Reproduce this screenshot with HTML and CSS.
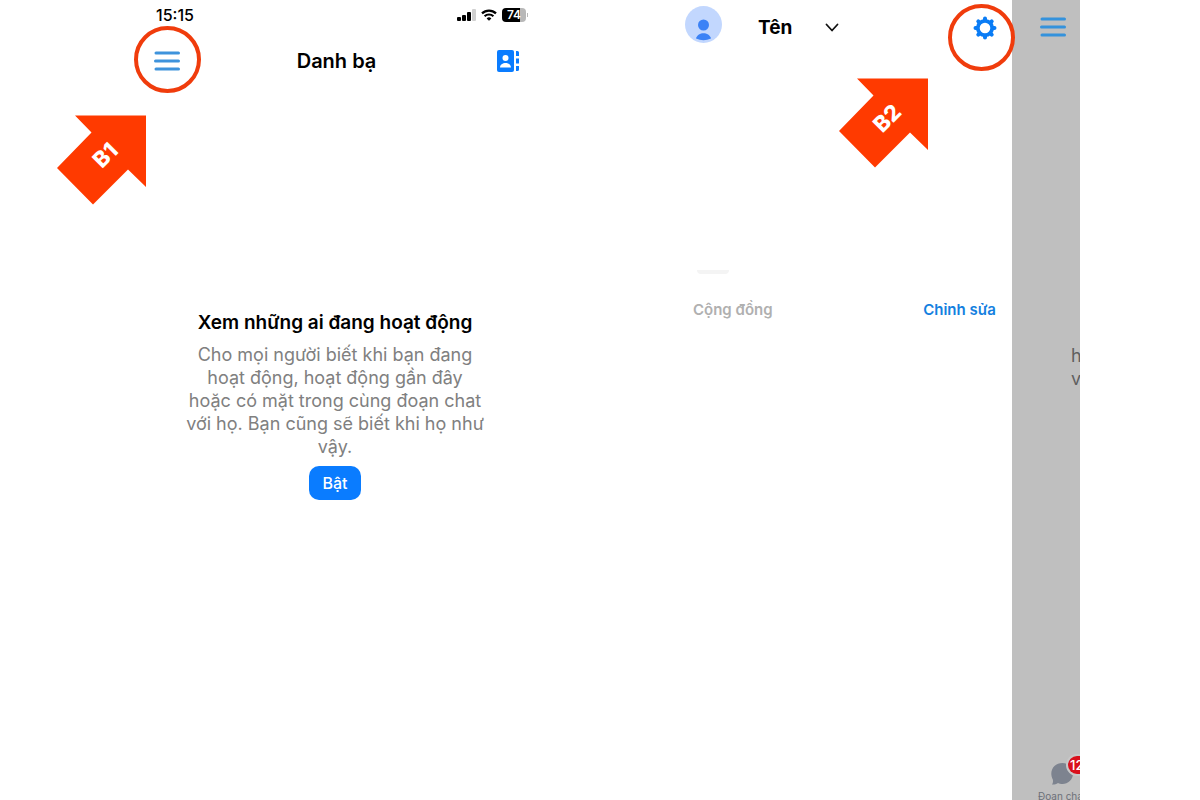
FILE: index.html
```html
<!DOCTYPE html>
<html lang="vi">
<head>
    <meta charset="UTF-8">
    <meta name="viewport" content="width=device-width, initial-scale=1.0">
    <title>Danh bạ</title>
    <link rel="stylesheet" href="styles.css">
</head>
<body>
    <main class="steps">
        <section class="phone">
            <div class="status-bar">
                <span class="time">15:15</span>
                <div class="status-icons">
                    <svg width="19" height="12" viewBox="0 0 19 12">
                        <rect x="0" y="8" width="4" height="4" rx="1"/>
                        <rect x="5" y="6" width="4" height="6" rx="1"/>
                        <rect x="10" y="3" width="4" height="9" rx="1"/>
                        <rect x="15" y="0" width="4" height="12" rx="1" fill="#d0d0d0"/>
                    </svg>
                    <svg width="16" height="12" viewBox="0 0 16 12" fill="none" stroke="#000" stroke-width="2.2">
                        <path d="M1 4.4a10 10 0 0 1 14 0M3.6 7.3a6.3 6.3 0 0 1 8.8 0"/>
                        <path d="M8 11.8 5.6 9.4a3.4 3.4 0 0 1 4.8 0z" fill="#000" stroke="none"/>
                    </svg>
                    <span class="battery">74</span>
                </div>
            </div>
            <header class="nav-bar">
                <button class="icon-btn ringed" aria-label="Menu">
                    <svg width="26" height="22" viewBox="0 0 26 22" fill="none" stroke="#3e93dc" stroke-width="3" stroke-linecap="round">
                        <path d="M2 3h22.500M1.500 11H24.500M2 19h22.500"/>
                    </svg>
                </button>
                <h1>Danh bạ</h1>
                <button class="icon-btn" aria-label="Thêm liên hệ">
                    <svg width="22" height="22" viewBox="0 0 22 22" fill="#0a7cff">
                        <rect width="17" height="22" rx="2"/>
                        <path d="M19 1h1.500a1.500 1.500 0 0 1 1.500 1.500V6h-3zM19 8.500h3v5h-3zM19 16h3v3.500a1.500 1.500 0 0 1-1.500 1.500H19z"/>
                        <circle cx="8.500" cy="8" r="3" fill="#fff"/>
                        <path d="M3 17.500c0-6 11-6 11 0z" fill="#fff"/>
                    </svg>
                </button>
            </header>
            <div class="activity">
                <h2>Xem những ai đang hoạt động</h2>
                <p>Cho mọi người biết khi bạn đang<br>hoạt động, hoạt động gần đây<br>hoặc có mặt trong cùng đoạn chat<br>với họ. Bạn cũng sẽ biết khi họ như<br>vậy.</p>
                <button class="enable-btn">Bật</button>
            </div>
            <svg class="arrow arrow-1" width="90" height="90" viewBox="0 0 90 90">
                <path d="M18 0.500h71V72L71 54.500 36 89.500 0 53 34.500 17.500z" fill="#ff3a00"/>
                <text x="48" y="48" transform="rotate(-45 48 40)">B1</text>
            </svg>
        </section>

        <section class="phone split">
            <div class="drawer">
                <header class="profile-bar">
                    <svg width="37" height="37" viewBox="0 0 37 37">
                        <circle cx="18.500" cy="18.500" r="18.500" fill="#c2d7fe"/>
                        <circle cx="18.500" cy="19" r="5.500" fill="#3b82f6"/>
                        <path d="M11 32.500c2-7 13-7 15 0q-7.500 3.500-15 0z" fill="#3b82f6"/>
                    </svg>
                    <button class="account">
                        Tên
                        <svg width="14" height="9" viewBox="0 0 14 9" fill="none" stroke="#111" stroke-width="1.800" stroke-linecap="round" stroke-linejoin="round">
                            <path d="m1.500 1.500 5.500 6 5.500-6"/>
                        </svg>
                    </button>
                    <button class="icon-btn ringed settings" aria-label="Cài đặt">
                        <svg width="24" height="24" viewBox="0 0 24 24">
                            <path d="M12 2.500v19M2.500 12h19M5.300 5.300l13.400 13.400M18.700 5.300 5.300 18.700" stroke="#0a7cf5" stroke-width="4" stroke-linecap="round"/>
                            <circle cx="12" cy="12" r="7.200" fill="#fff" stroke="#0a7cf5" stroke-width="3.800"/>
                        </svg>
                    </button>
                </header>
                <div class="list-edge"></div>
                <div class="community">
                    <h2>Cộng đồng</h2>
                    <a href="#">Chỉnh sửa</a>
                </div>
            </div>
            <aside class="peek">
                <button class="icon-btn" aria-label="Menu">
                    <svg width="26" height="22" viewBox="0 0 26 22" fill="none" stroke="#3492dc" stroke-width="3" stroke-linecap="round">
                        <path d="M2 3h22.500M1.500 11H24.500M2 19h22.500"/>
                    </svg>
                </button>
                <p>h<br>v</p>
                <a class="tab" href="#">
                    <span class="tab-icon">
                        <svg width="22" height="22" viewBox="0 0 22 22" fill="#7d838f">
                            <path d="M11.500 0C17 0 22 4.500 22 10.500S17 21 11.500 21c-2 0-3-.3-4.500-1-2 1.300-4 1.700-6 1.500 1-1.500 1.300-3 .8-5C-2.500 8 3 0 11.500 0z"/>
                        </svg>
                        <span class="badge">12</span>
                    </span>
                    Đoạn chat
                </a>
            </aside>
            <svg class="arrow arrow-2" width="90" height="90" viewBox="0 0 90 90">
                <path d="M18 0.500h71V72L71 54.500 36 89.500 0 53 34.500 17.500z" fill="#ff3a00"/>
                <text x="48" y="48" transform="rotate(-45 48 40)">B2</text>
            </svg>
        </section>
    </main>
</body>
</html>
```
FILE: styles.css
```css
*, *::after {
    box-sizing: border-box;
}

body {
    margin: 0;
    background-color: #fff;
    color: #000;
    font-family: Inter, "Liberation Sans", sans-serif;
}

h1, h2, p {
    margin: 0;
}

button {
    padding: 0;
    border: none;
    background: none;
    color: #000;
    font-family: inherit;
    cursor: pointer;
}

a {
    text-decoration: none;
}

svg {
    display: block;
}

.steps {
    display: grid;
    grid-template-columns: 43fr 41fr;
    gap: 120px;
    min-height: 100vh;
    padding: 0 120px;
}

.phone {
    position: relative;
}

/* status bar */
.status-bar {
    display: flex;
    align-items: center;
    justify-content: space-between;
    height: 30px;
    padding: 0 22px 0 36px;
}

.time {
    font-size: 16px;
    font-weight: 500;
}

.status-icons {
    display: flex;
    align-items: center;
    gap: 5px;
}

.battery {
    position: relative;
    width: 24px;
    height: 14px;
    margin-right: 2px;
    border-radius: 4px;
    background: linear-gradient(90deg, #000 75%, #b8b8b8 75%);
    color: #fff;
    font-size: 12px;
    font-weight: 600;
    line-height: 14px;
    text-align: center;
}

.battery::after {
    content: "";
    position: absolute;
    top: 5px;
    right: -2px;
    width: 1px;
    height: 4px;
    background-color: #b8b8b8;
}

/* nav bar */
.nav-bar {
    display: grid;
    grid-template-columns: 1fr auto 1fr;
    align-items: center;
    height: 61px;
    padding: 0 31px 0 34px;
}

.nav-bar h1 {
    font-size: 20px;
    font-weight: 600;
}

.icon-btn {
    position: relative;
    justify-self: start;
}

.icon-btn:last-child {
    justify-self: end;
}

/* red circle round the button to press */
.ringed::after {
    content: "";
    position: absolute;
    top: 50%;
    left: 50%;
    width: 67px;
    height: 67px;
    margin: -35px 0 0 -33px;
    border: 4px solid #f03c0c;
    border-radius: 50%;
}

.settings::after {
    margin: -24px 0 0 -37px;
}

.arrow {
    position: absolute;
}

.arrow text {
    fill: #fff;
    font-family: Inter, sans-serif;
    font-size: 22px;
    font-weight: 800;
    text-anchor: middle;
}

.arrow-1 {
    top: 115px;
    left: -63px;
}

.arrow-2 {
    top: 78px;
    left: 169px;
}

/* activity prompt */
.activity {
    display: flex;
    flex-direction: column;
    align-items: center;
    padding-top: 220px;
    text-align: center;
}

.activity h2 {
    margin-bottom: 8px;
    font-size: 19px;
    font-weight: 600;
    line-height: 24px;
}

.activity p {
    color: #808080;
    font-size: 18px;
    line-height: 23px;
    white-space: nowrap;
}

.enable-btn {
    margin-top: 8px;
    padding: 0 13px;
    border-radius: 10px;
    background-color: #0a7cff;
    color: #fff;
    font-size: 16px;
    font-weight: 500;
    line-height: 34px;
}

/* drawer */
.split {
    display: grid;
    grid-template-columns: 1fr 68px;
    height: 100vh;
}

.profile-bar {
    display: flex;
    align-items: center;
    height: 49px;
    padding: 0 15px;
}

.account {
    display: flex;
    align-items: center;
    gap: 33px;
    margin: 6px auto 0 36px;
    font-size: 19px;
    font-weight: 700;
}

.settings {
    z-index: 1;
    margin-top: 6px;
}

.list-edge {
    width: 32px;
    height: 4px;
    margin: 221px 0 0 27px;
    border-radius: 0 0 16px 16px;
    background-color: #f4f4f4;
}

.community {
    display: flex;
    justify-content: space-between;
    padding: 26px 16px 0 23px;
    font-size: 15px;
    line-height: 20px;
}

.community h2 {
    color: #b0b0b0;
    font-size: 15px;
    font-weight: 600;
}

.community a {
    color: #1480e0;
    font-weight: 600;
}

/* chat screen behind the drawer */
.peek {
    display: flex;
    flex-direction: column;
    align-items: flex-start;
    overflow: hidden;
    padding: 16px 0 0 28px;
    background-color: #bfbfbf;
}

.peek p {
    margin: 306px 0 0 31px;
    color: #606060;
    font-size: 18px;
    line-height: 23px;
}

.tab {
    margin: auto 0 -3px -2px;
    color: #6c7078;
    font-size: 10px;
    line-height: 14px;
    white-space: nowrap;
}

.tab-icon {
    display: block;
    position: relative;
    width: 22px;
    margin: 0 0 4px 13px;
}

.badge {
    position: absolute;
    top: -7px;
    left: 17px;
    width: 26px;
    height: 18px;
    padding-left: 2px;
    border-radius: 9px;
    background-color: #d9101c;
    box-shadow: 0 0 0 2px #c8c8c8;
    color: #fff;
    font-size: 13px;
    font-weight: 500;
    line-height: 18px;
}
```
